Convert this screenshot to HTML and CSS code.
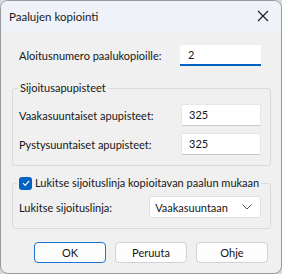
FILE: index.html
```html
<!DOCTYPE html>
<html>
<head>
<meta charset="utf-8">
<link rel="stylesheet" href="styles.css">
</head>
<body>
<div class="window">
  <div class="titlebar">
    <span class="title">Paalujen kopiointi</span>
    <svg class="close" width="12" height="12" viewBox="0 0 12 12"><path d="M1 1 L11 11 M11 1 L1 11" stroke="#1a1a1a" stroke-width="1.1" fill="none"/></svg>
  </div>
  <div class="content">
    <div class="row first">
      <span class="label">Aloitusnumero paalukopioille:</span>
      <div class="input focused">2</div>
    </div>
    <fieldset class="group g1">
      <legend>Sijoitusapupisteet</legend>
      <div class="row">
        <span class="label">Vaakasuuntaiset apupisteet:</span>
        <div class="input">325</div>
      </div>
      <div class="row second">
        <span class="label">Pystysuuntaiset apupisteet:</span>
        <div class="input">325</div>
      </div>
    </fieldset>
    <fieldset class="group g2">
      <legend class="checklegend">
        <span class="checkbox"><svg width="12" height="12" viewBox="0 0 12 12"><path d="M3 6.2 L5.2 8.4 L9.2 3.8" stroke="#fff" stroke-width="1.2" fill="none"/></svg></span>
        <span>Lukitse sijoituslinja kopioitavan paalun mukaan</span>
      </legend>
      <div class="row">
        <span class="label">Lukitse sijoituslinja:</span>
        <div class="select">
          <span>Vaakasuuntaan</span>
          <svg width="10" height="6" viewBox="0 0 10 6"><path d="M0.5 0.5 L5 5 L9.5 0.5" stroke="#555" stroke-width="1" fill="none"/></svg>
        </div>
      </div>
    </fieldset>
    <div class="buttons">
      <div class="btn default">OK</div>
      <div class="btn">Peruuta</div>
      <div class="btn">Ohje</div>
    </div>
  </div>
</div>
</body>
</html>
```
FILE: styles.css
```css
html, body {
  margin: 0;
  padding: 0;
  background: #d9d9d9;
}
body {
  font-family: Lato, "Noto Sans", sans-serif;
  font-size: 11px;
  color: #161616;
}
.window {
  box-sizing: border-box;
  width: 282px;
  height: 274px;
  border: 1px solid #9a9a9a;
  border-radius: 8px;
  overflow: hidden;
  background: #f0f0f0;
  display: flex;
  flex-direction: column;
}
.titlebar {
  height: 30px;
  flex: none;
  background: #eff3f9;
  display: flex;
  align-items: center;
  justify-content: space-between;
  padding: 0 12px 0 8px;
}
.title {
  font-size: 11.5px;
  color: #1a1a1a;
}
.content {
  flex: 1;
  padding: 14px 10px 0 11px;
  display: flex;
  flex-direction: column;
}
.row {
  display: flex;
  align-items: center;
  justify-content: space-between;
  height: 22px;
}
.row.first {
  flex: none;
  padding-left: 7px;
  padding-right: 10px;
  height: 21px;
}
.label {
  white-space: nowrap;
}
.input {
  box-sizing: border-box;
  width: 80px;
  height: 22px;
  background: #fff;
  border: 1px solid #e6e6e6;
  border-bottom-color: #c8c8c8;
  padding: 0 0 0 7px;
  line-height: 19px;
  border-radius: 2px;
}
.input.focused {
  width: 81px;
  height: 21px;
  border: none;
  border-bottom: 2px solid #0063c4;
  border-radius: 2px 2px 0 0;
  padding-left: 8px;
}
.group {
  flex: none;
  margin: 0;
  border: 1px solid #dadada;
  border-radius: 3px;
  padding: 0 9px 0 6px;
}
.group legend {
  padding: 0 2px;
  margin-left: -1px;
  line-height: 16px;
  white-space: nowrap;
}
.g1 {
  margin-top: 14px;
  padding-top: 8px;
  padding-bottom: 10px;
}
.g1 .row.second {
  margin-top: 7px;
}
.g2 {
  margin-top: 9px;
  padding-top: 5px;
  padding-bottom: 10px;
}
.checklegend {
  display: flex;
  align-items: center;
  gap: 3px;
  margin-left: -2px !important;
  padding: 0 2px 0 2px !important;
}
.checkbox {
  width: 13px;
  height: 13px;
  border-radius: 3px;
  background: #0063c4;
  display: flex;
  align-items: center;
  justify-content: center;
}
.select {
  box-sizing: border-box;
  width: 112px;
  height: 22px;
  background: #fff;
  border: 1px solid #e0e0e0;
  border-radius: 3px;
  display: flex;
  align-items: center;
  justify-content: space-between;
  padding: 0 8px 0 5px;
}
.buttons {
  flex: none;
  display: flex;
  justify-content: flex-end;
  gap: 9px;
  margin-top: 13px;
  padding-right: 3px;
}
.btn {
  box-sizing: border-box;
  width: 72px;
  height: 21px;
  background: #fdfdfd;
  border: 1px solid #d2d2d2;
  border-radius: 4px;
  display: flex;
  align-items: center;
  justify-content: center;
}
.btn.default {
  border: 1.5px solid #1a74d2;
}
```
